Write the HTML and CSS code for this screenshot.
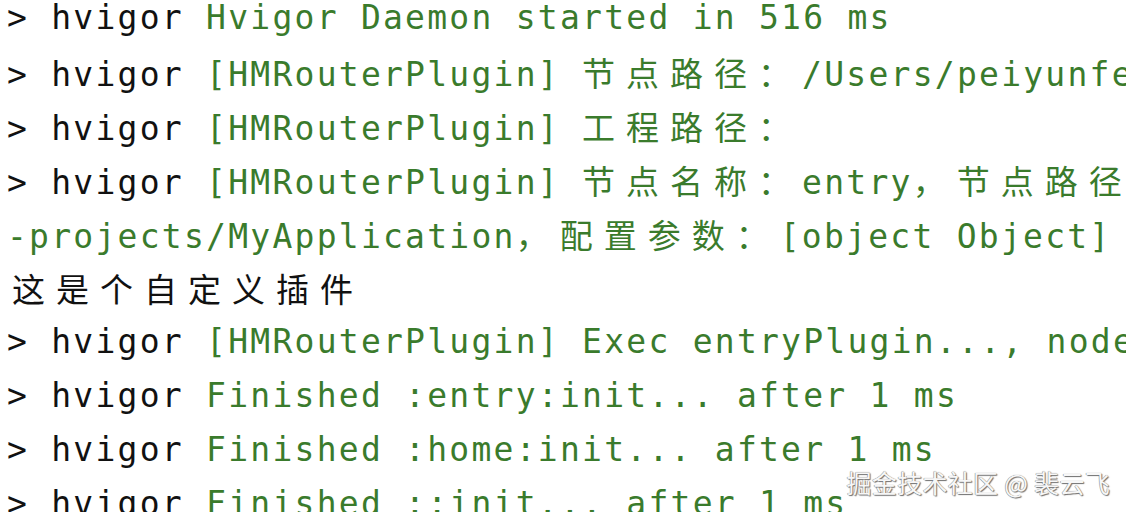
FILE: index.html
```html
<!DOCTYPE html>
<html lang="zh">
<head>
<meta charset="utf-8">
<title>hvigor log</title>
<link rel="stylesheet" href="styles.css">
</head>
<body>
<main class="console">
  <div class="line"><span class="pr">&gt; hvigor </span><span class="g">Hvigor Daemon started in 516 ms</span></div>
  <div class="line"><span class="pr">&gt; hvigor </span><span class="g">[HMRouterPlugin] <span class="cjk">节点路径：</span>/Users/peiyunfei/DevEcoStudioProjects</span></div>
  <div class="line"><span class="pr">&gt; hvigor </span><span class="g">[HMRouterPlugin] <span class="cjk">工程路径：</span></span></div>
  <div class="line"><span class="pr">&gt; hvigor </span><span class="g">[HMRouterPlugin] <span class="cjk">节点名称：</span>entry<span class="cjk">，节点路径：</span>/Users</span></div>
  <div class="line"><span class="g">-projects/MyApplication<span class="cjk">，配置参数：</span>[object Object]</span></div>
  <div class="line"><span class="cjk black">这是个自定义插件</span></div>
  <div class="line"><span class="pr">&gt; hvigor </span><span class="g">[HMRouterPlugin] Exec entryPlugin..., nodeName: entry</span></div>
  <div class="line"><span class="pr">&gt; hvigor </span><span class="g">Finished :entry:init... after 1 ms</span></div>
  <div class="line"><span class="pr">&gt; hvigor </span><span class="g">Finished :home:init... after 1 ms</span></div>
  <div class="line"><span class="pr">&gt; hvigor </span><span class="g">Finished ::init... after 1 ms</span></div>
</main>
<div class="watermark">掘金技术社区 @ 裴云飞</div>
</body>
</html>
```
FILE: styles.css
```css
html, body {
  margin: 0;
  padding: 0;
  background: #ffffff;
  width: 1126px;
  height: 512px;
  overflow: hidden;
}

body {
  position: relative;
}

.console {
  margin-top: -9px;
  padding-left: 7px;
  font-family: "DejaVu Sans Mono", "Liberation Mono", monospace;
  font-size: 33px;
  letter-spacing: 2.25px;
  line-height: 54px;
  color: #111111;
}

.line {
  white-space: pre;
  overflow: hidden;
  height: 54px;
}

.g {
  color: #3a7b2c;
}

.cjk {
  font-family: "Noto Sans CJK SC", "DejaVu Sans Mono", sans-serif;
  font-size: 33px;
  letter-spacing: 11px;
}

.black {
  color: #111111;
  padding-left: 5px;
}

.watermark {
  position: absolute;
  right: 16px;
  bottom: 15px;
  font-family: "Noto Sans CJK SC", "Liberation Sans", sans-serif;
  font-size: 25px;
  line-height: 30px;
  color: #f7f7f7;
  letter-spacing: 0.3px;
  text-shadow: 1px 1px 1px #6f6f6f, -0.5px -0.5px 0.5px #9a9a9a, 0 0 1px #888888;
}
```
